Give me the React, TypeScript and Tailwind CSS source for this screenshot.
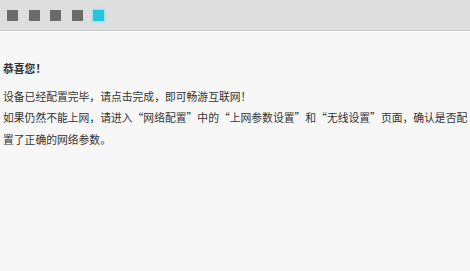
const steps = [false, false, false, false, true];

export default function App() {
  return (
    <div
      lang="zh-CN"
      className="w-[470px] h-[271px] overflow-hidden bg-[#f7f7f7] text-[#333333]"
      style={{ fontFamily: '"Noto Sans CJK SC", "Noto Sans", sans-serif' }}
    >
      <div className="h-[31px] bg-[#dedede] border-b border-[#c9c9c9] flex items-center gap-[10.5px] pl-[7px]">
        {steps.map((active, i) =>
          active ? (
            <span
              key={i}
              className="w-[11px] h-[11px] bg-[#25c3dc] shadow-[0_0_2px_1px_rgba(120,230,240,0.9)]"
            />
          ) : (
            <span key={i} className="w-[11px] h-[11px] bg-[#6b6b6b]" />
          ),
        )}
      </div>
      <div className="h-px bg-white" />
      <div className="pl-[3px] pt-[26px] text-[10.8px] leading-[21.5px] [font-feature-settings:'fwid']">
        <p className="font-bold mb-[6px]">恭喜您！</p>
        <p>设备已经配置完毕，请点击完成，即可畅游互联网！</p>
        <p>
          如果仍然不能上网，请进入“网络配置”中的“上网参数设置”和“无线设置”页面，确认是否配置了正确的网络参数。
        </p>
      </div>
    </div>
  );
}
